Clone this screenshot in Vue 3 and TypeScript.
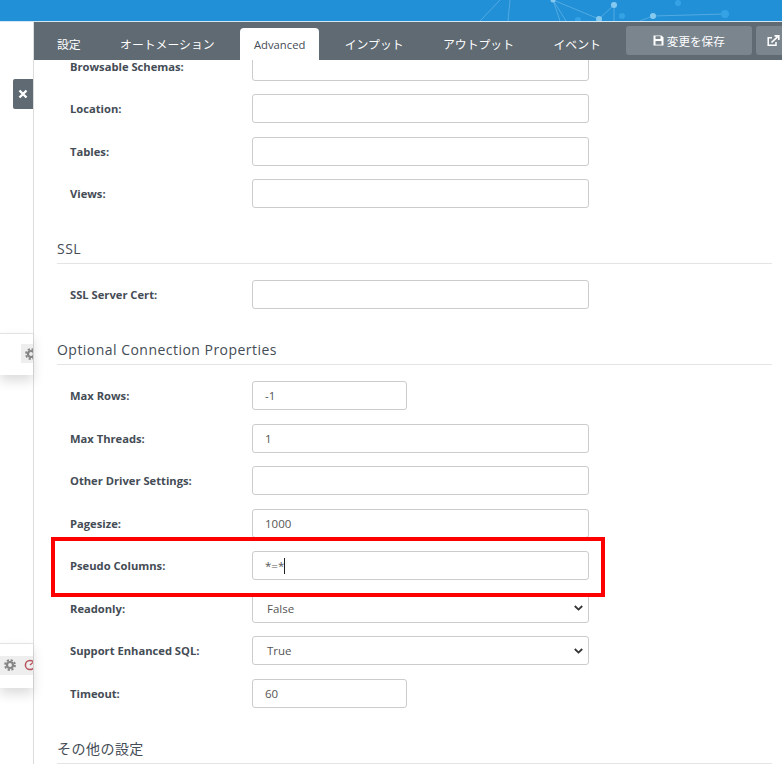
<template>
  <div class="page">
    <header class="top-bar">
      <svg class="network" width="312" height="21" viewBox="0 0 312 21" fill="none">
        <g stroke="#7cc0ec" stroke-width="1" opacity="0.55">
          <path d="M10 21L30 0M38 21L40 0M83 0L129 19M83 0L90 21M83 0L96 21M129 19L144 5M144 5V21M183 16L255 14M183 16L170 21" />
        </g>
        <g fill="#86c9ef">
          <circle cx="83" cy="0" r="2.5" />
          <circle cx="144" cy="5" r="3" />
          <circle cx="129" cy="19" r="3" />
          <circle cx="183" cy="16" r="3" />
        </g>
        <g fill="#35a2e6">
          <circle cx="152" cy="16" r="3" />
          <circle cx="208" cy="3" r="3" />
          <circle cx="255" cy="14" r="4" />
          <circle cx="108" cy="20" r="3" />
        </g>
      </svg>
    </header>
    <div class="body">
      <aside class="behind">
        <div class="close-btn">
          <svg width="10" height="10" viewBox="0 0 10 10"><path d="M1.5 1.5L8.5 8.5M8.5 1.5L1.5 8.5" stroke="#fff" stroke-width="2.4" /></svg>
        </div>
        <div class="bg-card first">
          <span class="card-tool">
            <svg class="gear" width="12" height="12" viewBox="0 0 12 12" fill="none"><circle cx="6" cy="6" r="3" stroke="#858585" stroke-width="2.2" /><circle cx="6" cy="6" r="5" stroke="#858585" stroke-width="1.8" stroke-dasharray="2.2 1.73" /></svg>
          </span>
        </div>
        <div class="bg-card second">
          <span class="card-tool">
            <svg class="gear" width="12" height="12" viewBox="0 0 12 12" fill="none"><circle cx="6" cy="6" r="3" stroke="#858585" stroke-width="2.2" /><circle cx="6" cy="6" r="5" stroke="#858585" stroke-width="1.8" stroke-dasharray="2.2 1.73" /></svg>
            <svg class="clock" width="12" height="12" viewBox="0 0 12 12"><circle cx="6" cy="6" r="4.6" fill="none" stroke="#b8525c" stroke-width="1.5" /><path d="M6 6L9 3.5" stroke="#b8525c" stroke-width="1.3" /></svg>
          </span>
        </div>
      </aside>
      <section class="panel">
        <nav class="tab-bar">
          <div class="tabs">
            <a v-for="tab in tabs" :key="tab" :class="['tab', { active: tab === 'Advanced' }]">{{ tab }}</a>
          </div>
          <button class="save-btn">
            <svg width="11" height="11" viewBox="0 0 11 11"><path d="M0.5 0.5H8.5L10.5 2.5V10.5H0.5Z" fill="#fff" /><rect x="2.5" y="1.2" width="5" height="2.8" fill="#7a858e" /><rect x="2.5" y="6" width="6" height="3.6" fill="#7a858e" /></svg>
            変更を保存
          </button>
          <button class="open-btn">
            <svg width="13" height="12" viewBox="0 0 13 12" fill="none"><path d="M9 7V10.2H1.2V2.8H5" stroke="#fff" stroke-width="1.5" /><path d="M4.5 7.5L10.5 1.8M7.5 0.8H11.8V5" stroke="#fff" stroke-width="1.7" /></svg>
          </button>
        </nav>
        <div class="scroll-area">
          <div class="form">
            <template v-for="group in groups" :key="group.title">
              <h3 v-if="group.title" class="section-title">{{ group.title }}</h3>
              <div class="fields">
                <div v-for="field in group.fields" :key="field.label" class="row">
                  <label class="row-label">{{ field.label }}:</label>
                  <div v-if="field.options" class="select-box">
                    <span>{{ field.value }}</span>
                    <svg width="9" height="6" viewBox="0 0 9 6" fill="none"><path d="M0.8 1L4.5 4.6L8.2 1" stroke="#333" stroke-width="1.8" /></svg>
                  </div>
                  <div v-else :class="['text-box', { short: field.short }]">
                    {{ field.value }}<i v-if="field.caret" class="caret"></i>
                  </div>
                </div>
              </div>
            </template>
          </div>
          <div class="highlight"></div>
        </div>
      </section>
    </div>
  </div>
</template>

<script setup lang="ts">
interface Field {
  label: string
  value?: string
  short?: boolean
  options?: boolean
  caret?: boolean
}

interface Group {
  title: string
  fields: Field[]
}

const tabs = ['設定', 'オートメーション', 'Advanced', 'インプット', 'アウトプット', 'イベント']

const groups: Group[] = [
  {
    title: '',
    fields: [
      { label: 'Browsable Schemas' },
      { label: 'Location' },
      { label: 'Tables' },
      { label: 'Views' },
    ],
  },
  {
    title: 'SSL',
    fields: [{ label: 'SSL Server Cert' }],
  },
  {
    title: 'Optional Connection Properties',
    fields: [
      { label: 'Max Rows', value: '-1', short: true },
      { label: 'Max Threads', value: '1' },
      { label: 'Other Driver Settings' },
      { label: 'Pagesize', value: '1000' },
      { label: 'Pseudo Columns', value: '*=*', caret: true },
      { label: 'Readonly', value: 'False', options: true },
      { label: 'Support Enhanced SQL', value: 'True', options: true },
      { label: 'Timeout', value: '60', short: true },
    ],
  },
  {
    title: 'その他の設定',
    fields: [],
  },
]
</script>

<style>
html,
body {
  margin: 0;
  background: #fff;
  overflow: hidden;
}
</style>

<style scoped>
.page {
  width: 782px;
  height: 764px;
  overflow: hidden;
  display: flex;
  flex-direction: column;
  font-family: "Open Sans", "Noto Sans CJK JP", sans-serif;
  color: #444c55;
}

.top-bar {
  height: 21px;
  flex: none;
  background: #2190d6;
  border-bottom: 1px solid #d5e6f2;
  overflow: hidden;
}

.network {
  display: block;
  margin-left: 470px;
}

.body {
  flex: 1;
  display: flex;
  min-height: 0;
}

.behind {
  width: 33px;
  flex: none;
  position: relative;
}

.close-btn {
  position: absolute;
  left: 13px;
  top: 57px;
  width: 20px;
  height: 30px;
  background: #5f6a72;
  border-radius: 2px 0 0 2px;
  display: flex;
  align-items: center;
  justify-content: center;
}

.bg-card {
  position: absolute;
  left: 0;
  width: 33px;
  background: #fff;
  border-top: 1px solid #e3e3e3;
  box-shadow: 0 6px 12px rgba(0, 0, 0, 0.14);
  display: flex;
  align-items: center;
  justify-content: flex-end;
}

.bg-card.first {
  top: 311px;
  height: 41px;
}

.bg-card.second {
  top: 621px;
  height: 44px;
}

.card-tool {
  background: #eeeeee;
  height: 19px;
  display: flex;
  align-items: center;
  gap: 8px;
  padding-left: 4px;
  overflow: hidden;
  margin-bottom: 2px;
}

.first .card-tool {
  width: 8px;
}

.second .card-tool {
  width: 29px;
}

.gear,
.clock {
  flex: none;
}

.panel {
  flex: 1;
  min-width: 0;
  border-left: 1px solid #dcdcdc;
  display: flex;
  flex-direction: column;
  background: #fff;
}

.tab-bar {
  height: 38px;
  flex: none;
  background: #5f6a72;
  display: flex;
  align-items: flex-end;
  white-space: nowrap;
  overflow: hidden;
}

.tabs {
  display: flex;
  gap: 11.4px;
  margin-left: 9px;
  flex: none;
}

.tab {
  height: 32px;
  flex: none;
  padding: 0 14px 1px;
  box-sizing: border-box;
  display: flex;
  align-items: center;
  color: #fff;
  font-size: 11.85px;
}

.tab.active {
  background: #fff;
  color: #444c55;
  font-size: 11.25px;
  padding-bottom: 0;
  border-radius: 4px 4px 0 0;
}

.save-btn,
.open-btn {
  flex: none;
  border: none;
  border-radius: 3px;
  background: #7a858e;
  color: #fff;
  height: 29px;
  margin-bottom: 5px;
  display: flex;
  align-items: center;
  justify-content: center;
  font-family: inherit;
  font-size: 11.6px;
  padding: 0;
}

.save-btn {
  width: 126px;
  margin-left: 11px;
  gap: 3px;
}

.open-btn {
  width: 40px;
  margin-left: 4px;
  justify-content: flex-start;
  padding-left: 11px;
}

.scroll-area {
  flex: 1;
  min-height: 0;
  overflow: hidden;
  position: relative;
}

.form {
  margin-top: -24.5px;
  padding: 0 10px 0 23px;
}

.section-title {
  margin: 29px 0 0;
  height: 26px;
  border-bottom: 1px solid #e4e4e4;
  font-size: 14px;
  font-weight: 400;
  line-height: 24px;
  letter-spacing: 0.47px;
  color: #444c55;
}

.fields {
  padding-top: 16px;
  padding-left: 13px;
  display: flex;
  flex-direction: column;
  gap: 13.5px;
}

.fields:empty {
  display: none;
}

.row {
  display: flex;
  align-items: center;
  height: 29px;
}

.row-label {
  width: 182px;
  flex: none;
  font-size: 11.2px;
  font-weight: 700;
}

.text-box,
.select-box {
  width: 337px;
  height: 29px;
  box-sizing: border-box;
  border: 1px solid #cccccc;
  border-radius: 3px;
  background: #fff;
  display: flex;
  align-items: center;
  font-size: 11.5px;
  color: #555;
  padding-left: 12px;
}

.text-box.short {
  width: 155px;
}

.select-box {
  padding: 0 5px 0 14px;
  justify-content: space-between;
}

.caret {
  width: 1px;
  height: 16px;
  background: #222;
}

.highlight {
  position: absolute;
  left: 17px;
  top: 477px;
  width: 554px;
  height: 60px;
  box-sizing: border-box;
  border: 4px solid #ff0000;
  pointer-events: none;
}
</style>
